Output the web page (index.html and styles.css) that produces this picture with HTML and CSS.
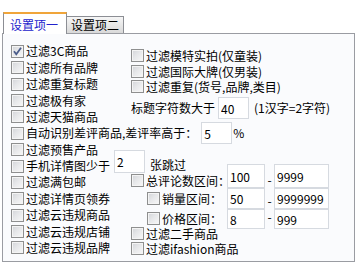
FILE: index.html
```html
<!DOCTYPE html>
<html lang="zh-CN">
<head>
<meta charset="utf-8">
<title>设置</title>
<link rel="stylesheet" href="styles.css">
</head>
<body>
<div class="tabs">
  <div class="tabbar">
    <div class="tab active">设置项一</div>
    <div class="tab">设置项二</div>
  </div>
  <div class="panel">
    <div class="col left">
      <label class="row"><span class="cb checked"><svg viewBox="0 0 13 13" width="13" height="13"><path d="M3 6.2 L5.3 9.2 L10 2.8" fill="none" stroke="#4a5c8a" stroke-width="1.8"/></svg></span>过滤3C商品</label>
      <label class="row"><span class="cb"></span>过滤所有品牌</label>
      <label class="row"><span class="cb"></span>过滤重复标题</label>
      <label class="row"><span class="cb"></span>过滤极有家</label>
      <label class="row"><span class="cb"></span>过滤天猫商品</label>
      <div class="row"><span class="cb"></span>自动识别差评商品,差评率高于：<input class="tb w31 h22 ml4" value="5" readonly><span class="ml1">%</span></div>
      <label class="row"><span class="cb"></span>过滤预售产品</label>
      <div class="row"><span class="cb"></span>手机详情图少于<input class="tb w31 h23 ml4 up8" value="2" readonly><span class="ml5 lift">张跳过</span></div>
      <label class="row"><span class="cb"></span>过滤满包邮</label>
      <label class="row"><span class="cb"></span>过滤详情页领券</label>
      <label class="row"><span class="cb"></span>过滤云违规商品</label>
      <label class="row"><span class="cb"></span>过滤云违规店铺</label>
      <label class="row"><span class="cb"></span>过滤云违规品牌</label>
    </div>
    <div class="col right">
      <label class="rrow"><span class="cb"></span>过滤模特实拍(仅童装)</label>
      <label class="rrow"><span class="cb"></span>过滤国际大牌(仅男装)</label>
      <label class="rrow"><span class="cb"></span>过滤重复(货号,品牌,类目)</label>
      <div class="titlerow">标题字符数大于<input class="tb w31 h22 ml3" value="40" readonly><span class="ml5">(1汉字=2字符)</span></div>
      <div class="range">
        <label class="rlabel end"><span class="cb"></span>总评论数区间：</label>
        <input class="tb r1" value="100" readonly>
        <span class="dash end">-</span>
        <input class="tb r1" value="9999" readonly>

        <label class="rlabel ind"><span class="cb"></span>销量区间：</label>
        <input class="tb r2" value="50" readonly>
        <span class="dash end">-</span>
        <input class="tb r2" value="9999999" readonly>

        <label class="rlabel ind up1"><span class="cb"></span>价格区间：</label>
        <input class="tb r3" value="8" readonly>
        <span class="dash start">-</span>
        <input class="tb r3" value="999" readonly>
      </div>
      <label class="rrow tight"><span class="cb"></span>过滤二手商品</label>
      <label class="rrow"><span class="cb"></span>过滤ifashion商品</label>
    </div>
  </div>
</div>
</body>
</html>
```

FILE: styles.css
```css
* { box-sizing: border-box; }
html, body { margin: 0; padding: 0; background: #ffffff; }
body {
  font-family: "Noto Sans CJK SC", "Noto Sans", sans-serif;
  font-size: 12px;
  color: #000;
  width: 356px;
  height: 271px;
  overflow: hidden;
}
.tabs { padding: 12px 1px 0 2px; }
.tabbar {
  display: flex;
  align-items: flex-end;
  padding-left: 1px;
  height: 21px;
}
.tab {
  height: 17px;
  line-height: 16px;
  padding: 0 4px;
  border: 1px solid #8c8e94;
  border-bottom: none;
  border-left: none;
  background: linear-gradient(#f6f6f6, #e9e9e9 45%, #d9d9d9);
  color: #000;
  white-space: nowrap;
}
.tab.active {
  position: relative;
  z-index: 2;
  height: 22px;
  margin-bottom: -1px;
  padding: 0 8px 0 6px;
  line-height: 21px;
  background: #ffffff;
  color: #2222cc;
  border-left: 1px solid #8c8e94;
  border-top: 2px solid #f0a53a;
  border-right: 1px solid #8c8e94;
}
.panel {
  height: 229px;
  border: 1px solid #9a9ca2;
  background: #fafbfd;
  display: grid;
  grid-template-columns: 120px 1fr;
  padding-left: 8px;
}
.col { display: flex; flex-direction: column; min-width: 0; }
.left { padding-top: 9.3px; }
.right { padding-top: 14px; }
.row, .rrow {
  display: flex;
  align-items: center;
  white-space: nowrap;
  height: 16.375px;
  line-height: 16px;
}
.rrow { height: 15.5px; line-height: 15px; }
.rrow.tight { height: 15px; margin-top: -3.5px; }
.cb {
  flex: none;
  width: 13px;
  height: 13px;
  margin-right: 2px;
  border: 1px solid #8e8f8f;
  background: linear-gradient(135deg, #d2d4d8 0%, #e6e7e9 45%, #f8f8f8 100%);
  box-shadow: inset 0 0 0 1px #f4f4f4;
  display: inline-flex;
}
.cb svg { margin: -1px; }
.tb {
  font-family: inherit;
  font-size: 12px;
  color: #000;
  background: #ffffff;
  border: 1px solid #d6dae0;
  padding: 0 2px;
  margin: 0;
  outline: none;
  flex: none;
  display: block;
}
.w31 { width: 31px; }
.h22 { height: 22px; }
.h23 { height: 23px; }
.ml1 { margin-left: 1px; }
.ml3 { margin-left: 3px; }
.ml4 { margin-left: 4px; }
.ml5 { margin-left: 5px; }
.lift { margin-bottom: 3px; }
.up8 { align-self: flex-start; margin-top: -8px; }
.titlerow {
  display: flex;
  align-items: center;
  white-space: nowrap;
  height: 22px;
  margin-top: 2.5px;
  line-height: 16px;
}
.range {
  display: grid;
  grid-template-columns: 96px 38px 9px 55px;
  grid-template-rows: 24px 21px 20px;
  margin-top: 45px;
}
.rlabel {
  display: flex;
  align-items: center;
  white-space: nowrap;
  line-height: 13px;
  height: 13px;
  align-self: center;
  min-width: 0;
}
.rlabel.end { align-self: end; margin-bottom: 1px; }
.rlabel.ind { padding-left: 16px; }
.rlabel.up1 { margin-bottom: 2px; }
.range .tb { width: 100%; height: 100%; position: relative; z-index: 1; }
.dash { line-height: 16px; text-align: center; }
.dash.end { align-self: end; }
.dash.start { align-self: start; }
```
